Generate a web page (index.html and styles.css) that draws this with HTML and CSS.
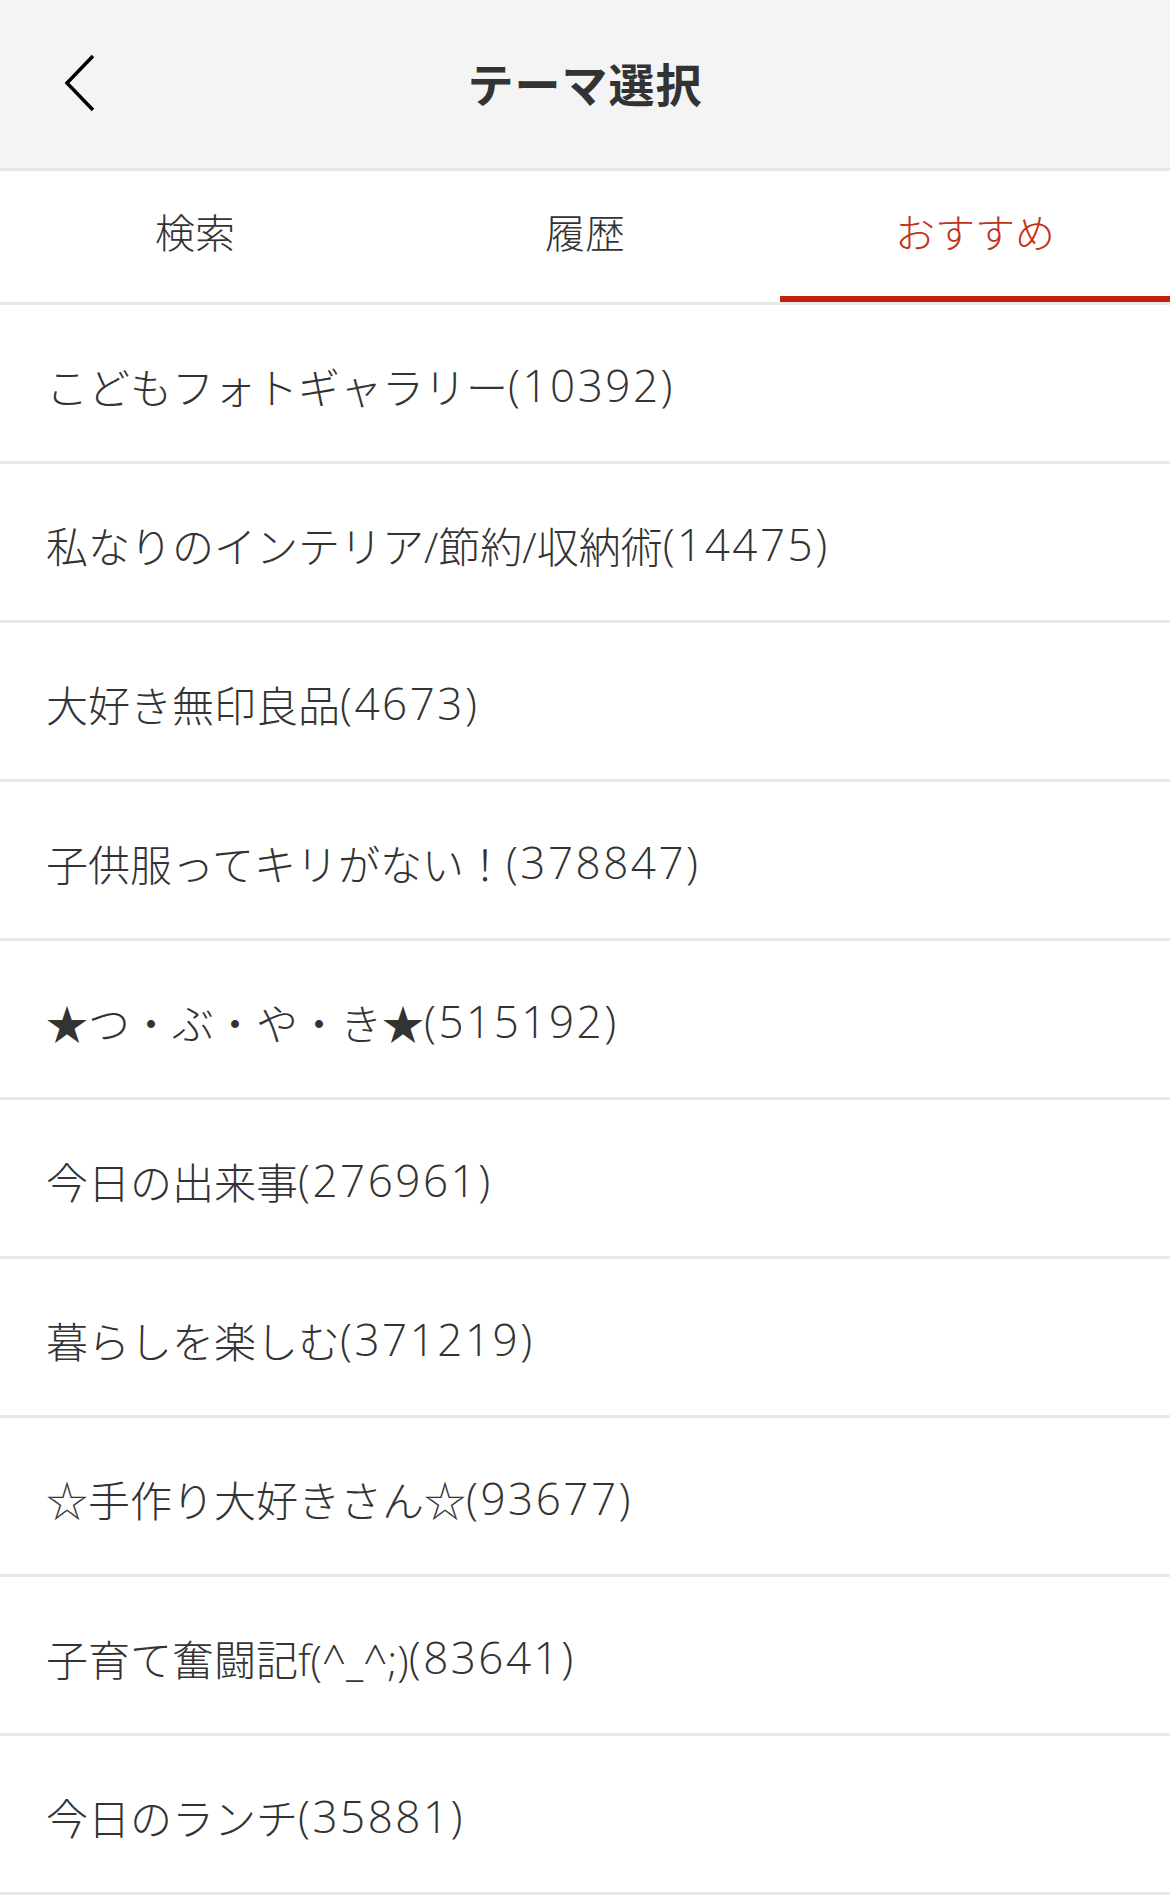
FILE: index.html
```html
<!DOCTYPE html>
<html lang="ja">
<head>
    <meta charset="UTF-8">
    <meta name="viewport" content="width=device-width, initial-scale=1.0">
    <title>テーマ選択</title>
    <link rel="stylesheet" href="styles.css">
</head>
<body>
    <header class="header">
        <button class="back" aria-label="戻る">
            <svg width="40" height="60" viewBox="0 0 40 60">
                <polyline points="29,2 3,29 29,56" fill="none" stroke="#000" stroke-width="3.5"/>
            </svg>
        </button>
        <h1>テーマ選択</h1>
    </header>

    <nav class="tabs">
        <div class="tab">検索</div>
        <div class="tab">履歴</div>
        <div class="tab active">おすすめ</div>
    </nav>

    <ul class="theme-list">
        <li>こどもフォトギャラリー<span class="count">(10392)</span></li>
        <li>私なりのインテリア/節約/収納術<span class="count">(14475)</span></li>
        <li>大好き無印良品<span class="count">(4673)</span></li>
        <li>子供服ってキリがない！<span class="count">(378847)</span></li>
        <li>★つ・ぶ・や・き★<span class="count">(515192)</span></li>
        <li>今日の出来事<span class="count">(276961)</span></li>
        <li>暮らしを楽しむ<span class="count">(371219)</span></li>
        <li>☆手作り大好きさん☆<span class="count">(93677)</span></li>
        <li>子育て奮闘記f(^_^;)<span class="count">(83641)</span></li>
        <li>今日のランチ<span class="count">(35881)</span></li>
    </ul>
</body>
</html>
```

FILE: styles.css
```css
* {
    margin: 0;
    padding: 0;
    box-sizing: border-box;
}

body {
    font-family: "Noto Sans CJK JP", "Noto Sans", sans-serif;
    background-color: #fff;
    color: #333;
}

.header {
    height: 171px;
    padding-bottom: 4px;
    background-color: #f4f4f4;
    border-bottom: 3px solid #e6e6e6;
    display: flex;
    align-items: center;
    justify-content: center;
    position: relative;
}

.header h1 {
    font-size: 46px;
    font-weight: bold;
    color: #333;
    letter-spacing: 1px;
}

.back {
    position: absolute;
    left: 64px;
    top: 54px;
    background: none;
    border: none;
    display: flex;
}

.tabs {
    display: flex;
    height: 134px;
    border-bottom: 3px solid #e8e8e8;
}

.tab {
    flex: 1;
    display: flex;
    align-items: center;
    justify-content: center;
    padding-bottom: 6px;
    font-size: 40px;
    font-weight: 300;
    color: #333;
    border-bottom: 6px solid transparent;
}

.tab.active {
    color: #c4301a;
    border-bottom-color: #c4200c;
}

.theme-list {
    list-style: none;
}

.theme-list li {
    height: 159px;
    display: flex;
    align-items: center;
    padding-left: 46px;
    padding-top: 4px;
    font-family: "Open Sans", "Noto Sans CJK JP", sans-serif;
    font-size: 42px;
    font-weight: 300;
    color: #333;
    border-bottom: 3px solid #e8e8e8;
}

.count {
    font-size: 44px;
    letter-spacing: 2.5px;
}
```
